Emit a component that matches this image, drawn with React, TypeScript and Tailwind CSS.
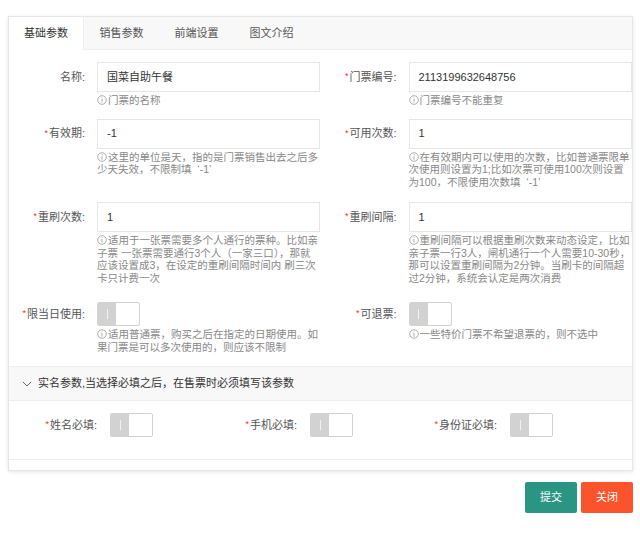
import React from "react"

const Tip = () => (
  <svg className="inline-block mr-[1px] -mt-[2px] align-middle" width="10" height="10" viewBox="0 0 10 10">
    <circle cx="5" cy="5" r="4.3" fill="none" stroke="#999" strokeWidth="0.8" />
    <rect x="4.6" y="2.2" width="0.8" height="0.8" fill="#999" />
    <rect x="4.6" y="3.8" width="0.8" height="3.8" fill="#999" />
  </svg>
)

function Hint({ lines }: { lines: string[] }) {
  return (
    <div className="mt-[2px] text-[10.5px] leading-[12.5px] text-[#888]">
      {lines.map((l, i) => (
        <div key={i} className="whitespace-pre">
          {i === 0 && <Tip />}
          {l}
        </div>
      ))}
    </div>
  )
}

function Label({ text, required, h = 30 }: { text: string; required?: boolean; h?: number }) {
  return (
    <div
      className={`w-[88px] flex-shrink-0 flex items-center justify-end pr-3 text-[11px] text-[#555] ${h === 30 ? "h-[30px]" : "h-[24px]"}`}
    >
      {required && <span className="text-[#ff2d2d] text-[9px] mr-[1px]">*</span>}
      {text}:
    </div>
  )
}

function Input({ value }: { value: string }) {
  return (
    <div className="h-[30px] w-[223px] border border-[#e6e6e6] bg-white flex items-center pl-[9px] text-[11px] text-[#333]">
      {value}
    </div>
  )
}

function Switch() {
  return (
    <div className="flex w-[43px] h-[24px] border border-[#d2d2d2] bg-white rounded-[2px] overflow-hidden">
      <div className="w-[18px] h-full bg-[#d2d2d2] flex items-center justify-center">
        <div className="w-px h-[10px] bg-[#f2f2f2]" />
      </div>
    </div>
  )
}

function Item({
  label,
  required,
  value,
  sw,
  hint,
}: {
  label: string
  required?: boolean
  value?: string
  sw?: boolean
  hint: string[]
}) {
  return (
    <div className="flex w-[312px]">
      <Label text={label} required={required} h={sw ? 24 : 30} />
      <div className="w-[223px]">
        {sw ? <Switch /> : <Input value={value ?? ""} />}
        <Hint lines={hint} />
      </div>
    </div>
  )
}

function SwitchItem({ label }: { label: string }) {
  return (
    <div className="flex w-[200px]">
      <div className="w-[101px] h-[24px] flex items-center justify-end pr-[13px] text-[11px] text-[#555]">
        <span className="text-[#ff2d2d] text-[9px] mr-[1px]">*</span>
        {label}:
      </div>
      <Switch />
    </div>
  )
}

const tabs = ["基础参数", "销售参数", "前端设置", "图文介绍"]

export default function App() {
  return (
    <div className="min-h-[537px] bg-white pt-4 px-2 font-['Liberation_Sans','Noto_Sans_CJK_SC',sans-serif]">
      <div className="w-[625px] border border-[#e6e6e6] bg-white shadow-[0_1px_4px_rgba(0,0,0,0.1)] pb-[10px]">
        {/* tabs */}
        <div className="flex h-[33px] bg-[#f8f8f8] border-b border-[#eee]">
          {tabs.map((t, i) => (
            <div
              key={t}
              className={`w-[75px] flex items-center justify-center text-[11px] ${
                i === 0 ? "bg-white h-[33px] text-[#333] border-r border-[#eee]" : "text-[#555]"
              }`}
            >
              {t}
            </div>
          ))}
        </div>

        <div className="pt-3">
          <div className="flex mb-[12px]">
            <Item label="名称" value="国菜自助午餐" hint={["门票的名称"]} />
            <Item label="门票编号" required value="2113199632648756" hint={["门票编号不能重复"]} />
          </div>
          <div className="flex mb-[14px]">
            <Item
              label="有效期"
              required
              value="-1"
              hint={["这里的单位是天，指的是门票销售出去之后多", "少天失效，不限制填  ‘-1’"]}
            />
            <Item
              label="可用次数"
              required
              value="1"
              hint={[
                "在有效期内可以使用的次数，比如普通票限单",
                "次使用则设置为1;比如次票可使用100次则设置",
                "为100，不限使用次数填  ‘-1’",
              ]}
            />
          </div>
          <div className="flex mb-[18px]">
            <Item
              label="重刷次数"
              required
              value="1"
              hint={[
                "适用于一张票需要多个人通行的票种。比如亲",
                "子票 一张票需要通行3个人（一家三口），那就",
                "应该设置成3，在设定的重刷间隔时间内 刷三次",
                "卡只计费一次",
              ]}
            />
            <Item
              label="重刷间隔"
              required
              value="1"
              hint={[
                "重刷间隔可以根据重刷次数来动态设定，比如",
                "亲子票一行3人，闸机通行一个人需要10-30秒，",
                "那可以设置重刷间隔为2分钟。当刷卡的间隔超",
                "过2分钟，系统会认定是两次消费",
              ]}
            />
          </div>
          <div className="flex mb-[13px]">
            <Item
              label="限当日使用"
              required
              sw
              hint={["适用普通票，购买之后在指定的日期使用。如", "果门票是可以多次使用的，则应该不限制"]}
            />
            <Item label="可退票" required sw hint={["一些特价门票不希望退票的，则不选中"]} />
          </div>

          {/* collapse */}
          <div className="border-t border-b border-[#eee]">
            <div className="h-[34px] bg-[#f8f8f8] border-b border-[#eee] flex items-center pl-[13px] text-[11px] text-[#333]">
              <svg width="10" height="10" viewBox="0 0 10 10" className="mr-[6px]">
                <polyline points="1,3 5,7 9,3" fill="none" stroke="#666" strokeWidth="1" />
              </svg>
              实名参数,当选择必填之后，在售票时必须填写该参数
            </div>
            <div className="flex pt-3 pb-[22px]">
              <SwitchItem label="姓名必填" />
              <SwitchItem label="手机必填" />
              <SwitchItem label="身份证必填" />
            </div>
          </div>
        </div>
      </div>

      <div className="w-[625px] flex justify-end gap-1 mt-[11px]">
        <button className="w-[52px] h-[31px] rounded-[2px] bg-[#2b9584] text-white text-[11px]">提交</button>
        <button className="w-[52px] h-[31px] rounded-[2px] bg-[#fb542d] text-white text-[11px]">关闭</button>
      </div>
    </div>
  )
}
